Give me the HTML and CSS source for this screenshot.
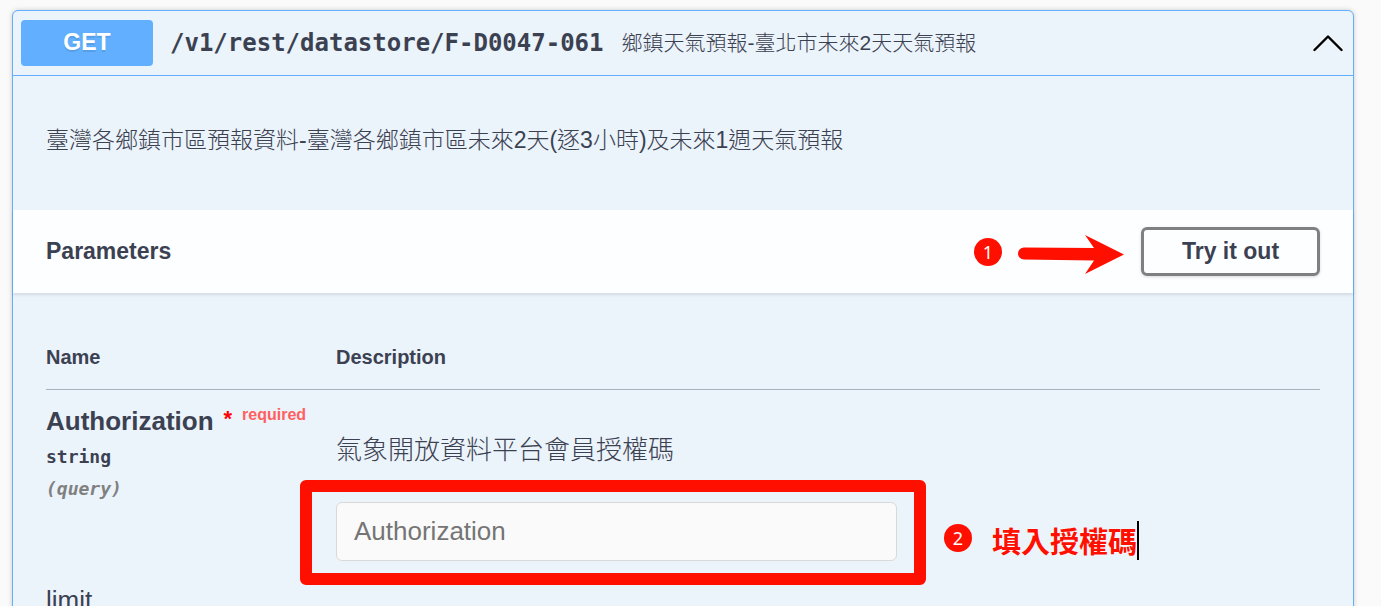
FILE: index.html
```html
<!DOCTYPE html>
<html lang="zh-Hant">
<head>
<meta charset="utf-8">
<title>F-D0047-061</title>
<link rel="stylesheet" href="styles.css">
</head>
<body>
<main class="operation">
  <header class="summary">
    <span class="method">GET</span>
    <span class="path">/v1/rest/datastore/F-D0047-061</span>
    <span class="summary-text">鄉鎮天氣預報-臺北市未來2天天氣預報</span>
    <button class="collapse" type="button" aria-label="Collapse operation" aria-expanded="true">
      <svg width="30" height="18" viewBox="0 0 30 18" aria-hidden="true"><path d="M1.5 16 L15 2.5 L28.5 16" fill="none" stroke="#000" stroke-width="2.4" stroke-linecap="round" stroke-linejoin="round"/></svg>
    </button>
  </header>
  <p class="description">臺灣各鄉鎮市區預報資料-臺灣各鄉鎮市區未來2天(逐3小時)及未來1週天氣預報</p>
  <div class="section-bar">
    <h2 class="section-title">Parameters</h2>
    <span class="step">1</span>
    <svg class="arrow" width="106" height="40" viewBox="0 0 106 40" aria-hidden="true"><path d="M6 13.5 L76 14 L67 1 L106 20.5 L67 40 L76 26.5 L6 25.5 A6 6 0 0 1 6 13.5 Z" fill="#ff0f00"/></svg>
    <button class="try-out" type="button">Try it out</button>
  </div>
  <div class="table-wrap">
    <table class="parameters">
      <thead>
        <tr><th class="col-name" scope="col">Name</th><th scope="col">Description</th></tr>
      </thead>
      <tbody>
        <tr>
          <td class="name-cell">
            <label class="param-name required" for="authorization">Authorization<span class="star">*</span><span class="required-text">required</span></label>
            <div class="param-type">string</div>
            <div class="param-in">(query)</div>
          </td>
          <td class="value-cell">
            <p class="param-description">氣象開放資料平台會員授權碼</p>
            <div class="field">
              <input class="text-input" id="authorization" type="text" placeholder="Authorization">
              <div class="highlight"></div>
              <div class="callout"><span class="step">2</span><span class="callout-text">填入授權碼</span></div>
            </div>
          </td>
        </tr>
        <tr>
          <td class="name-cell"><div class="param-name">limit</div></td>
          <td></td>
        </tr>
      </tbody>
    </table>
  </div>
</main>
</body>
</html>
```
FILE: styles.css
```css
* { box-sizing: border-box; }
body {
  margin: 0;
  padding: 10px 27px 0 12px;
  height: 100vh;
  overflow: hidden;
  background: #fafafa;
  color: #3b4151;
  font-family: "Liberation Sans", Arial, "Noto Sans CJK TC", sans-serif;
}
p, h2 { margin: 0; }
button { font-family: inherit; color: inherit; cursor: pointer; }
.operation {
  border: 1px solid #61affe;
  border-radius: 6px;
  background: #ebf3fb;
  box-shadow: 0 0 5px rgba(0, 0, 0, .19);
}
.summary {
  display: flex;
  align-items: center;
  padding: 9px 10px 9px 8px;
  border-bottom: 1px solid #61affe;
}
.method {
  width: 132px;
  padding-bottom: 2px;
  border-radius: 4px;
  background: #61affe;
  color: #fff;
  font-size: 23px;
  font-weight: 700;
  line-height: 44px;
  text-align: center;
  text-shadow: 0 2px 0 rgba(0, 0, 0, .1);
}
.path {
  margin: 0 18px 0 17px;
  font: 700 24px/32px "DejaVu Sans Mono", monospace;
}
.summary-text { flex: 1; font-size: 21px; font-weight: 300; line-height: 32px; }
.collapse { display: flex; padding: 0; border: 0; background: none; }
.description {
  padding: 44px 33px 50px;
  font-size: 23px;
  font-weight: 300;
  line-height: 40px;
}
.section-bar {
  display: flex;
  align-items: center;
  padding: 17px 33px;
  background: #fdfeff;
  box-shadow: 0 2px 3px rgba(0, 0, 0, .1);
}
.section-title { flex: 1; padding-bottom: 2px; font-size: 23px; line-height: 32px; }
.step {
  width: 28px;
  border-radius: 50%;
  background: #ff0f00;
  color: #fff;
  font: 18px/28px "Noto Sans", sans-serif;
  text-align: center;
}
.arrow { margin: 4px 17px 0 16px; }
.try-out {
  width: 179px;
  height: 49px;
  border: 3px solid #808080;
  border-radius: 6px;
  background: transparent;
  box-shadow: 0 1px 3px rgba(0, 0, 0, .15);
  font-size: 23px;
  font-weight: 700;
}
.table-wrap { padding: 52px 33px 0; }
.parameters { width: 100%; border-collapse: collapse; table-layout: fixed; }
.parameters th {
  padding: 0 0 20px;
  border-bottom: 1px solid #a9b2bf;
  font-size: 20px;
  line-height: 24px;
  text-align: left;
}
.parameters .col-name { width: 290px; }
.parameters td { padding: 0; vertical-align: top; }
.parameters .name-cell { padding-top: 15px; }
.param-name { display: block; font-size: 26px; line-height: 32px; }
.required { display: flex; margin-bottom: 4px; font-weight: 700; }
.star { margin: 0 10px; color: #f00; font-size: 22px; line-height: 28px; }
.required-text { color: #ff6060; font-size: 16px; line-height: 20px; }
.param-type, .param-in {
  font: 700 18px/32px "DejaVu Sans Mono", monospace;
}
.param-in { color: #808080; font-style: italic; }
.parameters .value-cell { padding: 40px 0 8px; }
.param-description { font-size: 26px; font-weight: 300; line-height: 40px; }
.field { position: relative; width: 57%; margin-top: 32px; }
.text-input {
  display: block;
  width: 100%;
  height: 59px;
  padding: 0 17px;
  border: 1px solid #d9d9d9;
  border-radius: 6px;
  background: #fafafa;
  color: inherit;
  font: 26px "Liberation Sans", Arial, sans-serif;
}
.text-input::placeholder { color: #757575; }
.highlight {
  position: absolute;
  inset: -22px -29px -24px -36px;
  border: 12px solid #ff0f00;
  border-radius: 6px;
  pointer-events: none;
}
.callout {
  position: absolute;
  left: calc(100% + 47px);
  top: 19px;
  display: flex;
  align-items: flex-start;
  gap: 20px;
  white-space: nowrap;
}
.callout .step { margin-top: 3px; }
.callout-text {
  border-right: 2px solid #000;
  color: #ff0f00;
  font: 700 29px/39px "Noto Sans CJK TC", sans-serif;
  text-shadow: 0 0 2px #fff;
}
```
